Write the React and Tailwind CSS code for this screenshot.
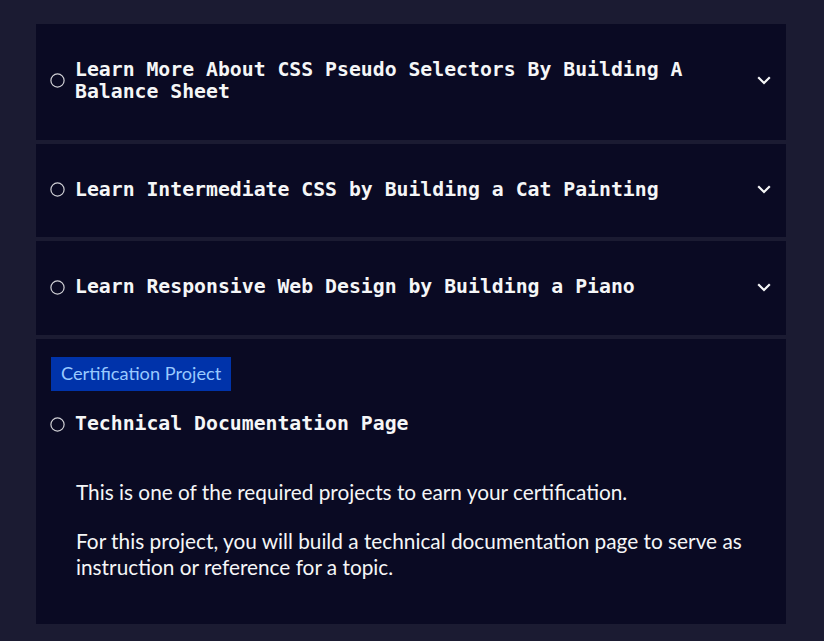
import React from "react";

const mono = { fontFamily: '"DejaVu Sans Mono", monospace' };

function Circle() {
  return (
    <svg width="15" height="15" viewBox="0 0 15 15" className="shrink-0">
      <circle cx="7.5" cy="7.5" r="6.6" fill="none" stroke="#d0d0d5" strokeWidth="1.2" />
    </svg>
  );
}

function Chevron() {
  return (
    <svg width="14" height="9" viewBox="0 0 14 9" className="shrink-0">
      <polyline points="1.2,1.2 7,7 12.8,1.2" fill="none" stroke="#f5f6f7" strokeWidth="2.2" />
    </svg>
  );
}

function Block({ title }) {
  return (
    <div className="bg-[#0a0a23] flex items-center pl-[14px] pr-[15px] pt-[35px] pb-[37px]">
      <Circle />
      <div
        className="flex-1 ml-[10px] mr-[20px] text-[19.8px] leading-[1.1] font-bold text-[#f5f6f7]"
        style={mono}
      >
        {title}
      </div>
      <Chevron />
    </div>
  );
}

export default function App() {
  return (
    <div
      className="w-full min-h-[641px] bg-[#1b1b32] pt-[24px] px-[36px] pb-[17px]"
      style={{ fontFamily: 'Lato, "Noto Sans", sans-serif' }}
    >
      <div className="w-[750px] flex flex-col gap-[4px]">
        <Block title="Learn More About CSS Pseudo Selectors By Building A Balance Sheet" />
        <Block title="Learn Intermediate CSS by Building a Cat Painting" />
        <Block title="Learn Responsive Web Design by Building a Piano" />
        <div className="bg-[#0a0a23] px-[15px] pt-[18px] pb-[21px]">
          <div className="inline-block bg-[#0033aa] text-[#99c9ff] text-[18.2px] leading-[32px] pb-[2px] px-[10px]">
            Certification Project
          </div>
          <div className="flex items-center mt-[22px] -ml-[1px]">
            <Circle />
            <div
              className="ml-[10px] text-[19.8px] leading-[22px] font-bold text-[#f5f6f7]"
              style={mono}
            >
              Technical Documentation Page
            </div>
          </div>
          <div className="pl-[25px] pr-[20px] mt-[44px] text-[20.8px] leading-[26px] text-[#f5f6f7]">
            <p className="mb-[23px]">This is one of the required projects to earn your certification.</p>
            <p className="mb-[23px]">
              For this project, you will build a technical documentation page to serve as instruction or reference for a topic.
            </p>
          </div>
        </div>
      </div>
    </div>
  );
}
